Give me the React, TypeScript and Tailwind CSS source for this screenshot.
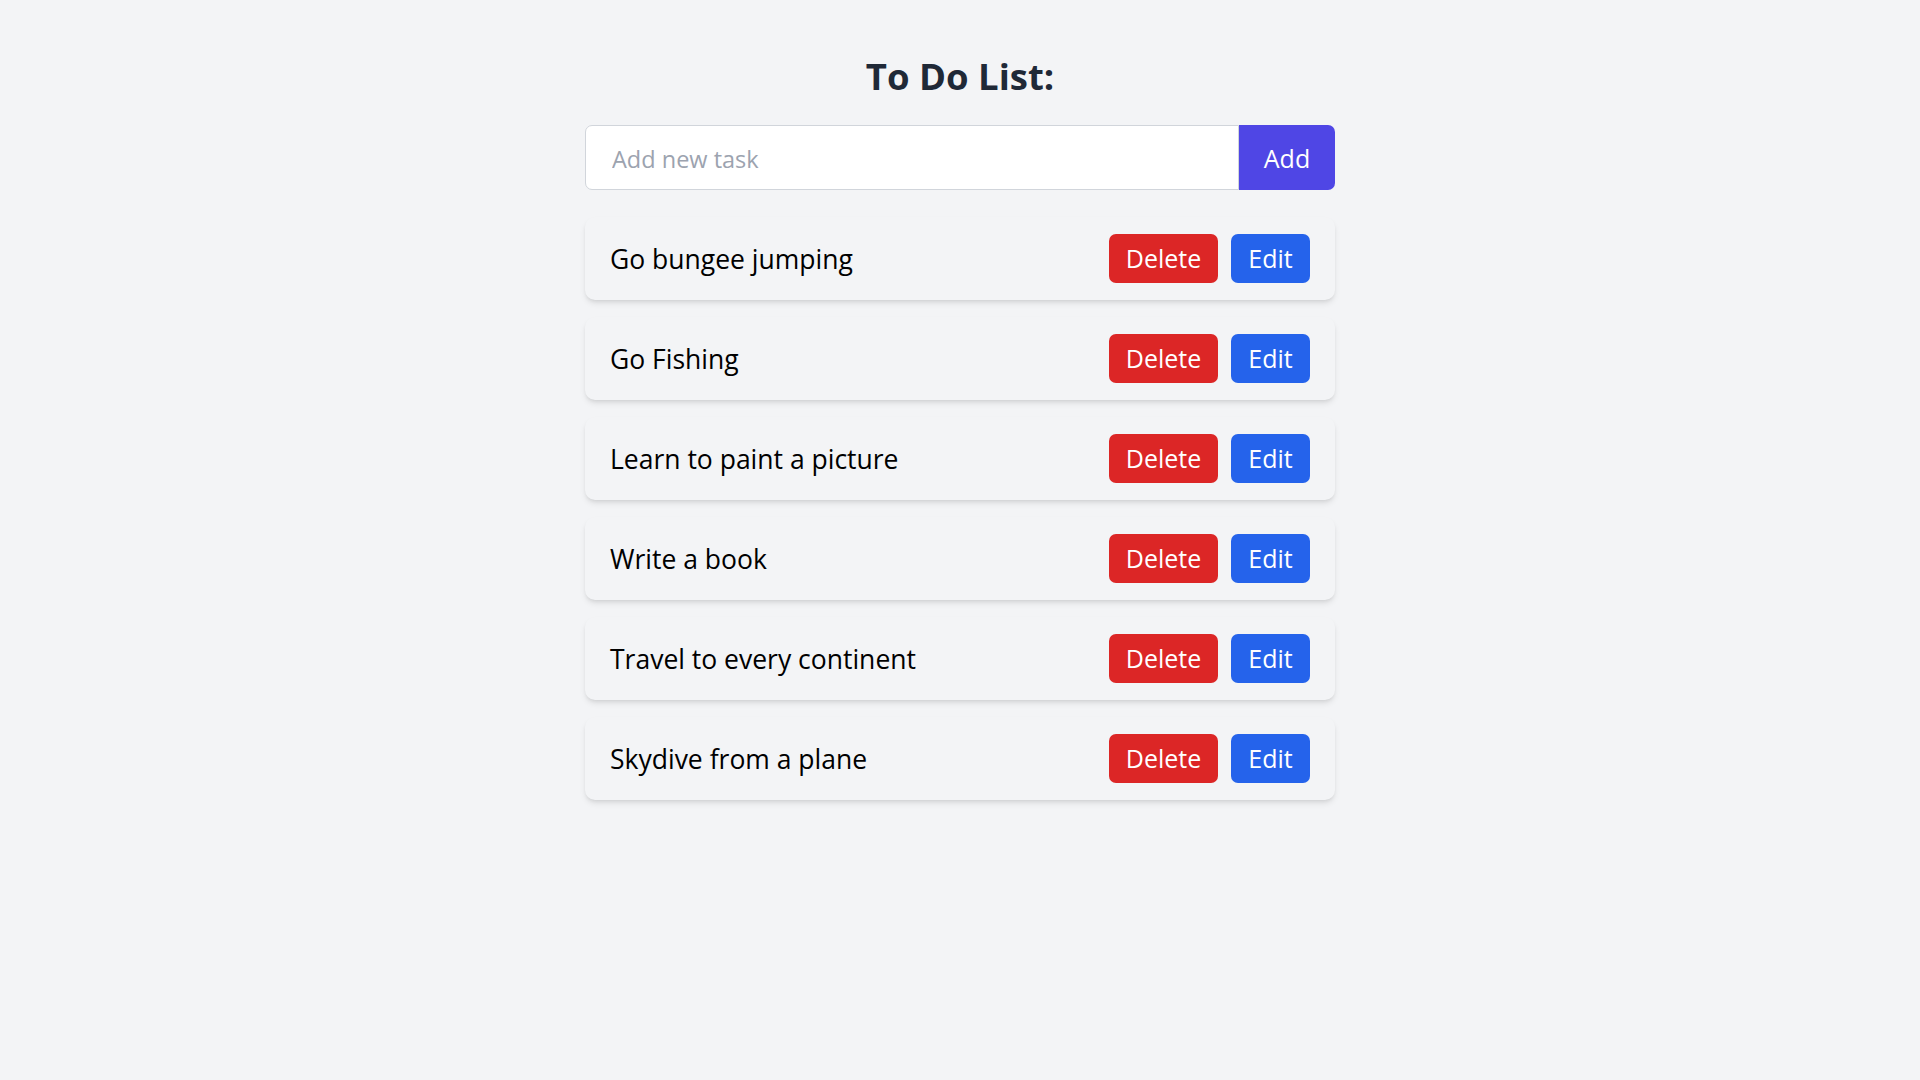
import React from "react";

const tasks = [
  "Go bungee jumping",
  "Go Fishing",
  "Learn to paint a picture",
  "Write a book",
  "Travel to every continent",
  "Skydive from a plane",
];

export default function App() {
  return (
    <div
      className="min-h-screen bg-[#f3f4f6] pt-[54px]"
      style={{ fontFamily: '"Open Sans", "Noto Sans", sans-serif' }}
    >
      <div className="mx-auto w-[750px]">
        <h1 className="text-center text-[36.5px] leading-[45px] font-bold text-[#1f2937]">
          To Do List:
        </h1>
        <div className="mt-[26px] flex h-[65px]">
          <input
            type="text"
            placeholder="Add new task"
            className="h-full flex-1 rounded-l-[7px] border border-[#d1d5db] bg-white px-[26px] pt-[2px] text-[23.5px] text-black placeholder:text-[#9ca3af] outline-none"
          />
          <button className="h-full w-[96px] rounded-r-[7px] bg-[#4f46e5] pt-[2px] text-[25px] text-white">
            Add
          </button>
        </div>
        <ul className="mt-[27px] flex flex-col gap-[17px]">
          {tasks.map((t) => (
            <li
              key={t}
              className="flex h-[83px] items-center justify-between rounded-[10px] bg-[#f3f4f6] pl-[25px] pr-[25px] shadow-[0_4px_6px_-1px_rgba(0,0,0,0.1),0_2px_4px_-2px_rgba(0,0,0,0.1)]"
            >
              <span className="pt-[3px] text-[26.5px] text-black">{t}</span>
              <div className="flex gap-[13px]">
                <button className="h-[49px] w-[109px] rounded-[7px] bg-[#dc2626] pt-[1px] text-[25px] text-white">
                  Delete
                </button>
                <button className="h-[49px] w-[79px] rounded-[7px] bg-[#2563eb] pt-[1px] text-[25px] text-white">
                  Edit
                </button>
              </div>
            </li>
          ))}
        </ul>
      </div>
    </div>
  );
}
